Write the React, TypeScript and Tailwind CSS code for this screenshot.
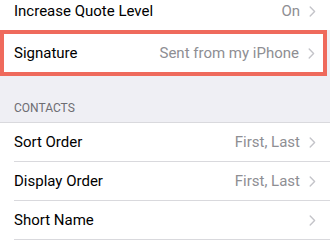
import React from "react";

function Chevron() {
  return (
    <svg width="7" height="11" viewBox="0 0 7 11" className="shrink-0">
      <path d="M1.2 1 L5.6 5.5 L1.2 10" fill="none" stroke="#c4c4c9" strokeWidth="1.4" strokeLinecap="round" strokeLinejoin="round" />
    </svg>
  );
}

function Row({ label, value, last }: { label: string; value?: string; last?: boolean }) {
  return (
    <div className="pl-[14px]">
      <div className={`h-[39px] flex items-center pr-[14px] ${last ? "" : "border-b border-[#d9d9dd]"}`}>
        <span className="flex-1 text-[15px] text-black">{label}</span>
        {value && <span className="text-[15px] text-[#8e8e93] mr-[9px]">{value}</span>}
        <Chevron />
      </div>
    </div>
  );
}

export default function App() {
  return (
    <div className="w-[330px] h-[250px] overflow-hidden bg-[#efeff4] font-['Roboto',sans-serif]">
      <div className="bg-white -mt-[7px] h-[37px] flex items-center pl-[14px] pr-[14px]">
        <span className="flex-1 text-[15px] text-black">Increase Quote Level</span>
        <span className="text-[15px] text-[#8e8e93] mr-[9px]">On</span>
        <Chevron />
      </div>
      <div className="w-[327px] h-[46px] border-[4px] border-[#ef6a5c] bg-white flex items-center pl-[10px] pr-[8px]">
        <span className="flex-1 text-[15px] text-black">Signature</span>
        <span className="text-[15px] text-[#8e8e93] mr-[9px]">Sent from my iPhone</span>
        <Chevron />
      </div>
      <div className="h-[46px] pt-[25px] px-[14px] text-[12px] leading-[14px] text-[#6d6d72]">
        CONTACTS
      </div>
      <div className="bg-white border-t border-[#d9d9dd]">
        <Row label="Sort Order" value="First, Last" />
        <Row label="Display Order" value="First, Last" />
        <Row label="Short Name" />
        <div className="h-[20px]" />
      </div>
    </div>
  );
}
